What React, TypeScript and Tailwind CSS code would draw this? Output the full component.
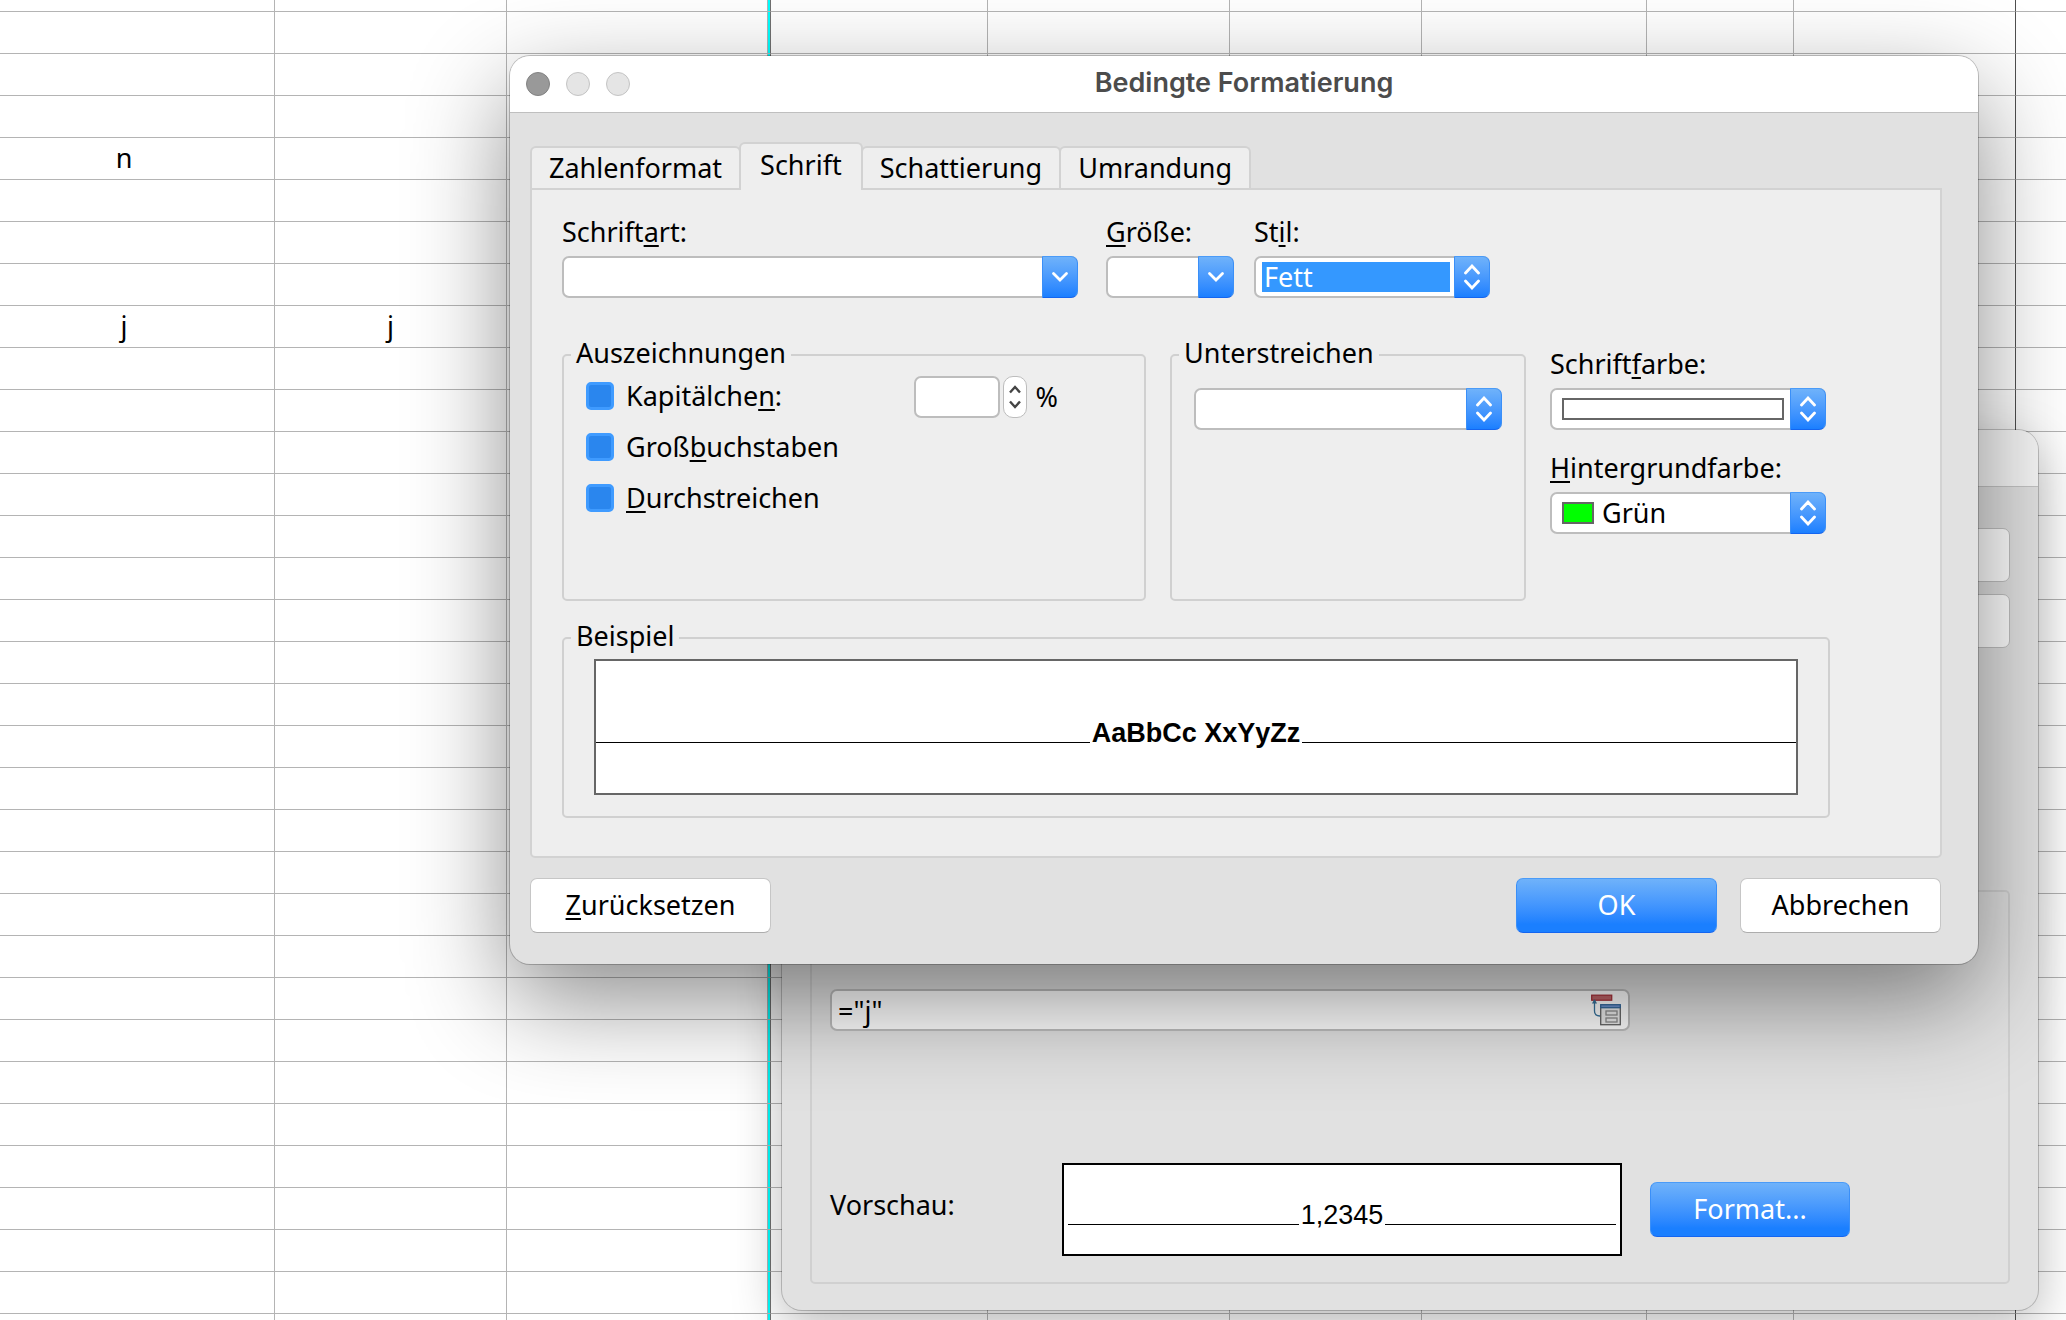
import { useState } from "react";
import type { ReactNode } from "react";

const ROW_COUNT = 32;
const COLUMNS = [275, 232, 264, 217, 242, 192, 225, 147, 222];

const CELLS: Record<string, string> = {
  "4-0": "n",
  "8-0": "j",
  "8-1": "j",
};

const TABS = ["Zahlenformat", "Schrift", "Schattierung", "Umrandung"];

function columnClass(col: number) {
  if (col === 0) return "border-r border-[#b4b4b4] pr-[26px]";
  if (col === 2)
    return "border-r border-r-[#707070] border-b-[#b4b4b4] shadow-[inset_-2px_0_0_#00ffff,inset_-3px_0_0_#b4b4b4]";
  if (col === 8) return "border-r border-r-[#505050] border-b-[#b4b4b4]";
  return "border-r border-[#b4b4b4]";
}

function Sheet() {
  return (
    <table className="w-full table-fixed border-separate border-spacing-0">
      <colgroup>
        {COLUMNS.map((width, i) => (
          <col key={i} style={{ width }} />
        ))}
        <col />
      </colgroup>
      <tbody>
        {Array.from({ length: ROW_COUNT + 1 }, (_, row) => (
          <tr key={row} className={row === 0 ? "h-3" : "h-[42px]"}>
            {COLUMNS.map((_, col) => (
              <td
                key={col}
                className={`border-b px-0 pt-0 pb-[2px] text-center leading-8 ${columnClass(col)}`}
              >
                {CELLS[`${row}-${col}`]}
              </td>
            ))}
            <td className="border-b border-[#b4b4b4] p-0" />
          </tr>
        ))}
      </tbody>
    </table>
  );
}

// Mnemonic letter
function U({ children }: { children: string }) {
  return (
    <span className="underline decoration-2 underline-offset-3 [text-decoration-skip-ink:none]">
      {children}
    </span>
  );
}

function ChevronDown() {
  return (
    <svg width="18" height="12" viewBox="0 0 18 12" fill="none" aria-hidden="true">
      <path d="M2.5 2.5 9 9l6.5-6.5" stroke="currentColor" strokeWidth="2.8" strokeLinecap="round" />
    </svg>
  );
}

function ChevronUpDown() {
  return (
    <svg width="18" height="26" viewBox="0 0 18 26" fill="none" aria-hidden="true">
      <path
        d="M2.5 9 9 2l6.5 7M2.5 17 9 24l6.5-7"
        stroke="currentColor"
        strokeWidth="2.8"
        strokeLinecap="round"
      />
    </svg>
  );
}

const BOX =
  "relative flex h-[42px] items-center rounded-[7px] border-2 border-[#bdbdbd] bg-white";
const BLUE_END =
  "pointer-events-none absolute -top-[2px] -right-[2px] flex h-[42px] w-9 items-center justify-center rounded-r-[7px] border border-t-[#4a9bf8] border-x-[#3a8ff8] border-b-[#1465f0] bg-linear-to-b from-[#6fb2fa] to-[#1a7fff] text-white";

function ComboInput({ id }: { id: string }) {
  return (
    <div className={BOX}>
      <input id={id} type="text" className="h-full min-w-0 flex-1 bg-transparent px-2 outline-none" />
      <button
        type="button"
        aria-label="Liste öffnen"
        className="-my-[2px] -mr-[2px] flex h-[42px] w-9 items-center justify-center rounded-r-[7px] border border-t-[#4a9bf8] border-x-[#3a8ff8] border-b-[#1465f0] bg-linear-to-b from-[#6fb2fa] to-[#1a7fff] text-white"
      >
        <ChevronDown />
      </button>
    </div>
  );
}

function SelectBox({ children }: { children: ReactNode }) {
  return (
    <div className={BOX}>
      {children}
      <span className={BLUE_END}>
        <ChevronUpDown />
      </span>
    </div>
  );
}

function Group({
  title,
  className,
  children,
}: {
  title: string;
  className: string;
  children: ReactNode;
}) {
  return (
    <fieldset className={`min-w-0 rounded-[5px] border-2 border-[#d0d0d0] pl-[7px] ${className}`}>
      <legend className="px-[5px] pb-1 leading-8">{title}</legend>
      {children}
    </fieldset>
  );
}

function Check({ id, children }: { id: string; children: ReactNode }) {
  return (
    <div className="flex h-8 items-center gap-3">
      <input
        id={id}
        type="checkbox"
        className="size-7 appearance-none rounded-[5px] border-3 border-[#3f9bff] bg-[#2a86ee]"
      />
      <label htmlFor={id} className="leading-8">
        {children}
      </label>
    </div>
  );
}

function PushButton({
  primary,
  className,
  children,
}: {
  primary?: boolean;
  className: string;
  children: ReactNode;
}) {
  return (
    <button
      type="button"
      className={
        primary
          ? `h-[55px] rounded-[7px] border border-t-[#4a9bf8] border-x-[#3a8ff8] border-b-[#1465f0] bg-linear-to-b from-[#6fb2fa] to-[#1a7fff] to-85% text-white ${className}`
          : `h-[55px] rounded-[7px] border border-[#c6c6c6] border-b-[#adadad] bg-white ${className}`
      }
    >
      {children}
    </button>
  );
}

function ShrinkIcon() {
  return (
    <svg width="30" height="32" viewBox="0 0 30 32" fill="none" aria-hidden="true">
      <rect x="0.7" y="1.2" width="20" height="5" fill="#c0666a" stroke="#a8323a" strokeWidth="1.3" />
      <path d="M3.5 9v8q0 5 5.5 5" stroke="#35729c" strokeWidth="1.3" />
      <path d="M3.5 5 6 9.5H1z" fill="#35729c" />
      <rect x="9.7" y="12.7" width="19.6" height="18" fill="#ececec" stroke="#636363" strokeWidth="1.3" />
      <rect x="9.7" y="10.7" width="19.6" height="3" fill="#6d93cf" stroke="#35689c" strokeWidth="1.3" />
      <rect x="15" y="17" width="11" height="4" stroke="#8c8c8c" strokeWidth="1.3" />
      <rect x="15" y="24" width="11" height="4" stroke="#8c8c8c" strokeWidth="1.3" />
    </svg>
  );
}

function ConditionWindow() {
  return (
    <section className="absolute top-[430px] right-7 left-[782px] overflow-clip rounded-[20px] bg-[#e1e1e1] pb-[26px] shadow-[0_0_0_1px_rgba(0,0,0,0.2),0_16px_50px_rgba(0,0,0,0.28)]">
      <header className="h-[57px] border-b border-[#c4c4c4] bg-[#f6f6f6]" />
      <div className="mt-[41px] mr-7 flex flex-col items-end gap-3">
        <button type="button" aria-label="Hinzufügen" className="h-[54px] w-[200px] rounded-[7px] border border-[#c0c0c0] bg-white" />
        <button type="button" aria-label="Löschen" className="h-[54px] w-[200px] rounded-[7px] border border-[#c0c0c0] bg-white" />
      </div>
      <div className="mx-7 mt-[242px] rounded-[5px] border-2 border-[#d0d0d0] pt-[97px] pb-[26px] pl-[18px]">
        <div className="mr-[378px] flex h-[42px] items-center rounded-[7px] border-2 border-[#bdbdbd] bg-white pr-[7px]">
          <input
            type="text"
            aria-label="Bedingung"
            defaultValue={'="j"'}
            className="h-full min-w-0 flex-1 bg-transparent px-[6px] outline-none"
          />
          <button type="button" aria-label="Verkleinern">
            <ShrinkIcon />
          </button>
        </div>
        <div className="mt-[132px] mr-[158px] flex items-center">
          <span className="w-[232px] pb-[10px] leading-8">Vorschau:</span>
          <div className="flex h-[93px] flex-1 items-start justify-center gap-[2px] border-2 border-black bg-white px-1 pt-[34px]">
            <span className="h-[26px] flex-1 border-b border-black" />
            <span className="font-['Liberation_Sans',Arial,sans-serif] leading-8">1,2345</span>
            <span className="h-[26px] flex-1 border-b border-black" />
          </div>
          <PushButton primary className="ml-7 w-[200px]">
            Format...
          </PushButton>
        </div>
      </div>
    </section>
  );
}

function FontPanel() {
  return (
    <div className="rounded-b-[5px] border-2 border-[#d2d2d2] bg-[#eeeeee] pt-[26px] pr-[110px] pb-[38px] pl-[30px]">
      <div className="mr-[340px] flex">
        <div className="mr-7 flex flex-1 flex-col gap-2">
          <label htmlFor="family" className="leading-8">
            Schrift<U>a</U>rt:
          </label>
          <ComboInput id="family" />
        </div>
        <div className="mr-5 flex w-[128px] flex-col gap-2">
          <label htmlFor="size" className="leading-8">
            <U>G</U>röße:
          </label>
          <ComboInput id="size" />
        </div>
        <div className="flex w-[236px] flex-col gap-2">
          <label htmlFor="style" className="leading-8">
            St<U>i</U>l:
          </label>
          <SelectBox>
            <select
              id="style"
              className="mr-[38px] ml-[6px] h-[30px] min-w-0 flex-1 appearance-none bg-[#3498ff] px-[2px] leading-[30px] text-white"
            >
              <option>Fett</option>
            </select>
          </SelectBox>
        </div>
      </div>

      <div className="mt-[39px] flex h-[264px] gap-6">
        <Group title="Auszeichnungen" className="flex-1">
          <div className="flex justify-between pt-[3px] pr-[86px] pl-[15px]">
            <div className="flex flex-col gap-[19px] pt-1">
              <Check id="smallcaps">
                Kapitälche<U>n</U>:
              </Check>
              <Check id="caps">
                Groß<U>b</U>uchstaben
              </Check>
              <Check id="strike">
                <U>D</U>urchstreichen
              </Check>
            </div>
            <div className="flex h-[42px] items-center">
              <input
                type="text"
                aria-label="Kapitälchen in Prozent"
                className="h-[42px] w-[86px] rounded-[7px] border-2 border-[#bdbdbd] bg-white px-2"
              />
              <div className="mr-[9px] ml-[3px] flex h-[42px] w-6 flex-col items-center justify-center gap-[6px] rounded-[10px] border border-[#bdbdbd] bg-white text-[#444444]">
                <button type="button" aria-label="Mehr">
                  <svg width="14" height="9" viewBox="0 0 14 9" fill="none">
                    <path d="M2 7.5 7 2l5 5.5" stroke="currentColor" strokeWidth="2.4" />
                  </svg>
                </button>
                <button type="button" aria-label="Weniger">
                  <svg width="14" height="9" viewBox="0 0 14 9" fill="none">
                    <path d="M2 1.5 7 7l5-5.5" stroke="currentColor" strokeWidth="2.4" />
                  </svg>
                </button>
              </div>
              <span className="leading-8">%</span>
            </div>
          </div>
        </Group>

        <Group title="Unterstreichen" className="w-[356px]">
          <div className="pt-[15px] pr-[22px] pl-[15px]">
            <SelectBox>
              <select aria-label="Unterstreichen" className="h-full min-w-0 flex-1 appearance-none">
                <option></option>
              </select>
            </SelectBox>
          </div>
        </Group>

        <div className="mr-1 flex w-[276px] flex-col gap-2 pt-[11px]">
          <label htmlFor="color" className="leading-8">
            Schrift<U>f</U>arbe:
          </label>
          <SelectBox>
            <select
              id="color"
              className="mr-10 ml-[10px] h-[22px] min-w-0 flex-1 appearance-none border-2 border-[#666666] bg-white"
            >
              <option></option>
            </select>
          </SelectBox>
          <label htmlFor="background" className="mt-[14px] leading-8">
            <U>H</U>intergrundfarbe:
          </label>
          <SelectBox>
            <span className="ml-[10px] h-[22px] w-8 border-2 border-[#666666] bg-[#00ff00]" />
            <select
              id="background"
              className="mr-9 h-full min-w-0 flex-1 appearance-none bg-transparent px-2 leading-8"
            >
              <option>Grün</option>
            </select>
          </SelectBox>
        </div>
      </div>

      <Group title="Beispiel" className="mt-[19px] pr-[30px] pb-[21px]">
        <div className="pt-[3px] pl-[23px]">
          <div className="flex h-[136px] items-start gap-[2px] border-2 border-[#666666] bg-white pt-[56px]">
            <span className="h-[26px] flex-1 border-b border-black" />
            <span className="font-['Liberation_Sans',Arial,sans-serif] leading-8 font-bold">
              AaBbCc XxYyZz
            </span>
            <span className="h-[26px] flex-1 border-b border-black" />
          </div>
        </div>
      </Group>
    </div>
  );
}

function FormatDialog() {
  const [tab, setTab] = useState("Schrift");

  return (
    <section
      role="dialog"
      aria-labelledby="dialog-title"
      className="absolute top-[56px] right-[88px] left-[510px] rounded-[20px] bg-[#e1e1e1] shadow-[0_0_0_1px_rgba(0,0,0,0.22),0_36px_100px_rgba(0,0,0,0.46)]"
    >
      <header className="relative flex h-[57px] items-center justify-center rounded-t-[20px] border-b border-[#bfbfbf] bg-white">
        <div className="absolute left-4 flex gap-4">
          <button type="button" aria-label="Schließen" className="size-6 rounded-full border border-[#828282] bg-[#999999]" />
          <button type="button" aria-label="Minimieren" className="size-6 rounded-full border border-[#c4c4c4] bg-[#e5e5e5]" />
          <button type="button" aria-label="Zoomen" className="size-6 rounded-full border border-[#c4c4c4] bg-[#e5e5e5]" />
        </div>
        <h1 id="dialog-title" className="pb-[2px] font-[Inter,sans-serif] text-[27px] leading-8 font-semibold text-[#4c4c4c]">
          Bedingte Formatierung
        </h1>
      </header>

      <div className="pt-[29px] pr-9 pb-[31px] pl-5">
        <div role="tablist" className="flex h-[46px] items-end">
          {TABS.map((name) => (
            <button
              key={name}
              type="button"
              role="tab"
              aria-selected={tab === name}
              onClick={() => setTab(name)}
              className={
                tab === name
                  ? "relative -mr-[2px] -mb-[2px] h-12 rounded-t-[6px] border-2 border-b-0 border-[#d2d2d2] bg-[#eeeeee] px-[19px] pb-1 leading-8"
                  : "-mr-[2px] h-[42px] rounded-t-[6px] border-2 border-b-0 border-[#d2d2d2] bg-[#eeeeee] px-[17px] leading-8"
              }
            >
              {name}
            </button>
          ))}
        </div>
        <FontPanel />
        <div className="mt-5 mr-px flex">
          <PushButton className="mr-auto w-[241px]">
            <U>Z</U>urücksetzen
          </PushButton>
          <PushButton primary className="mr-[23px] w-[201px]">
            OK
          </PushButton>
          <PushButton className="w-[201px]">Abbrechen</PushButton>
        </div>
      </div>
    </section>
  );
}

export default function App() {
  return (
    <main className="relative h-screen min-h-[1320px] overflow-hidden bg-white font-['Noto_Sans','Open_Sans',sans-serif] text-[27px] text-black">
      <Sheet />
      <ConditionWindow />
      <FormatDialog />
    </main>
  );
}
